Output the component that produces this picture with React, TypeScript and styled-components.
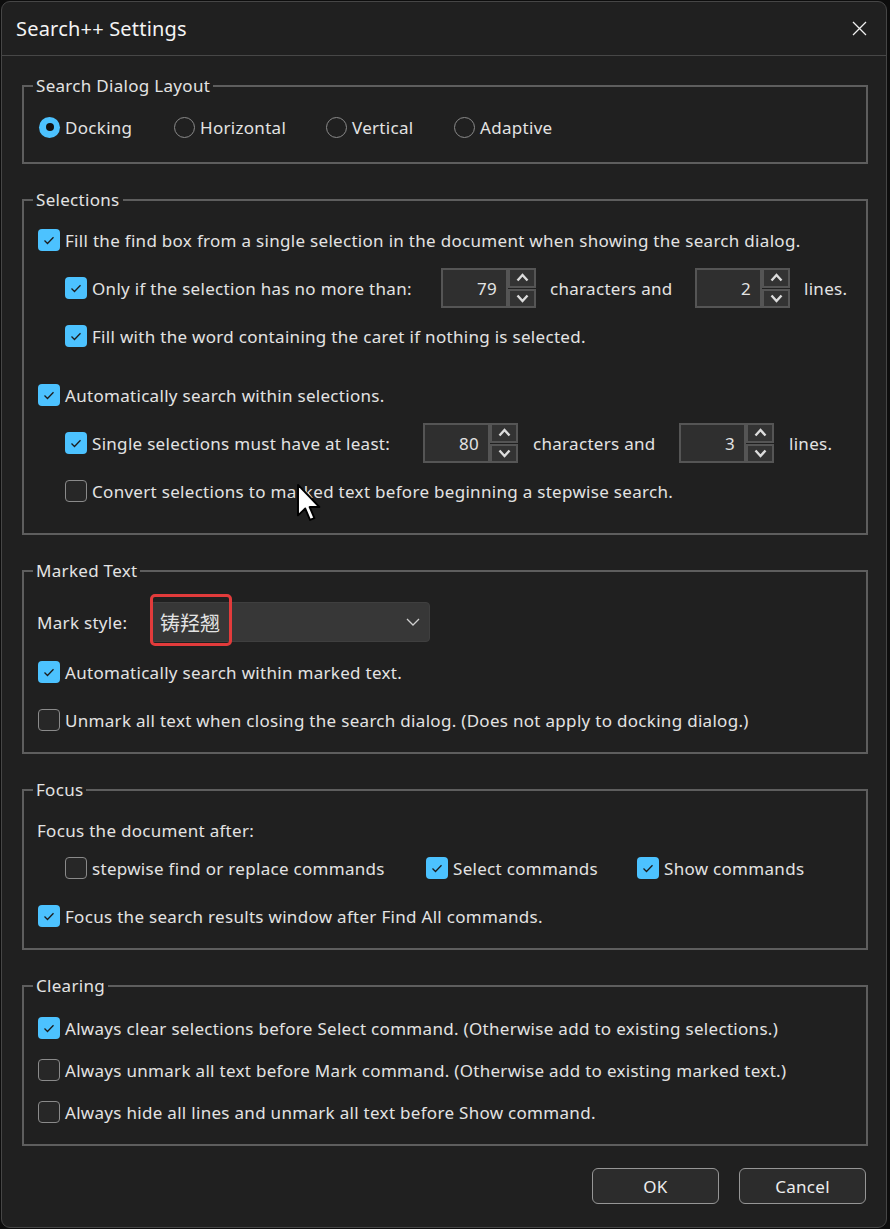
import React from "react";
import styled, { createGlobalStyle } from "styled-components";

const GlobalStyle = createGlobalStyle`
  html, body { margin: 0; padding: 0; background: #0d0d0d; }
  #root { width: 890px; height: 1229px; }
  * { box-sizing: border-box; }
`;

const Window = styled.div`
  position: relative;
  margin: 1px 3px 1px 1px;
  height: 1227px;
  background: #202020;
  border: 1px solid #464646;
  border-radius: 9px;
  display: flex;
  flex-direction: column;
  font-family: "Noto Sans", "Noto Sans CJK SC", sans-serif;
  color: #e3e3e3;
  font-size: 17px;
  letter-spacing: 0.3px;
  overflow: hidden;
`;

const TitleBar = styled.div`
  height: 54px;
  border-bottom: 1px solid #474747;
  display: flex;
  align-items: center;
  justify-content: space-between;
  padding: 0 19px 0 14px;
`;

const Title = styled.div`
  font-size: 20px;
  letter-spacing: 0.2px;
  color: #f4f4f4;
`;

const Content = styled.div`
  padding: 20px 18px 0 20px;
  display: flex;
  flex-direction: column;
  gap: 26px;
`;

const Group = styled.fieldset`
  margin: 0;
  padding: 0;
  min-width: 0;
  border: 2px solid #5e5e5e;
`;

const Legend = styled.legend`
  margin-left: 9px;
  padding: 0 3px;
  line-height: 20px;
  font-size: 17px;
`;

const Body = styled.div<{ $pt: number; $pb: number }>`
  padding: ${(p) => p.$pt}px 0 ${(p) => p.$pb}px 0;
  display: flex;
  flex-direction: column;
`;

const Row = styled.div<{ $h: number; $indent: number }>`
  height: ${(p) => p.$h}px;
  display: flex;
  align-items: center;
  padding-left: ${(p) => p.$indent}px;
  white-space: nowrap;
`;

const Spacer = styled.div<{ $h: number }>`
  height: ${(p) => p.$h}px;
`;

const Item = styled.label<{ $w?: number }>`
  display: flex;
  align-items: center;
  gap: 5px;
  flex-shrink: 0;
  width: ${(p) => (p.$w ? `${p.$w}px` : "auto")};
`;

const Box = styled.span<{ $on: boolean }>`
  width: 22px;
  height: 22px;
  border-radius: 4px;
  flex-shrink: 0;
  display: grid;
  place-items: center;
  background: ${(p) => (p.$on ? "#4cc2ff" : "#272727")};
  border: ${(p) => (p.$on ? "none" : "1.5px solid #8a8a8a")};
`;

const RadioCircle = styled.span<{ $on: boolean }>`
  width: 21px;
  height: 21px;
  border-radius: 50%;
  flex-shrink: 0;
  display: grid;
  place-items: center;
  background: ${(p) => (p.$on ? "#4cc2ff" : "transparent")};
  border: ${(p) => (p.$on ? "none" : "1.5px solid #8a8a8a")};
`;

const Dot = styled.span`
  width: 8px;
  height: 8px;
  border-radius: 50%;
  background: #111;
`;

const Text = styled.span<{ $w?: number; $pl?: number }>`
  display: inline-block;
  flex-shrink: 0;
  width: ${(p) => (p.$w ? `${p.$w}px` : "auto")};
  padding-left: ${(p) => p.$pl ?? 0}px;
`;

const Spin = styled.div`
  display: flex;
  width: 95px;
  height: 40px;
  flex-shrink: 0;
`;

const SpinField = styled.div`
  width: 67px;
  height: 40px;
  background: #2f2f2f;
  border: 2px solid #555;
  display: flex;
  align-items: center;
  justify-content: flex-end;
  padding-right: 9px;
`;

const SpinButtons = styled.div`
  width: 28px;
  display: flex;
  flex-direction: column;
  gap: 1px;
`;

const SpinButton = styled.div`
  flex: 1;
  background: #333;
  border: 2px solid #555;
  display: grid;
  place-items: center;
`;

const ComboWrap = styled.div`
  position: relative;
  width: 280px;
  height: 40px;
  flex-shrink: 0;
`;

const Combo = styled.div`
  width: 100%;
  height: 100%;
  background: #373737;
  border: 1px solid #3f3f3f;
  border-radius: 4px;
  display: flex;
  align-items: center;
  justify-content: space-between;
  padding: 0 8px 0 9px;
  font-size: 20px;
  letter-spacing: 0;
`;

const Highlight = styled.div`
  position: absolute;
  left: 0;
  top: -8px;
  width: 82px;
  bottom: -4px;
  border: 3px solid #e23b3b;
  border-radius: 5px;
  pointer-events: none;
`;

const Footer = styled.div`
  display: flex;
  justify-content: flex-end;
  gap: 20px;
  padding: 22px 20px 0 0;
`;

const Button = styled.button`
  width: 127px;
  height: 36px;
  border-radius: 6px;
  border: 1.5px solid #969696;
  background: #2c2c2c;
  color: #ececec;
  font-family: inherit;
  font-size: 17px;
  letter-spacing: 0.3px;
`;

const Cursor = styled.svg`
  position: absolute;
  left: 294px;
  top: 481px;
`;

const CheckMark = () => (
  <svg width="22" height="22" viewBox="0 0 22 22">
    <polyline points="6.5,11.5 9.5,14.5 15.5,8.2" fill="none" stroke="#1c1c1c" strokeWidth="1.3" />
  </svg>
);

const Check = ({ on, label, w }: { on: boolean; label: string; w?: number }) => (
  <Item $w={w}>
    <Box $on={on}>{on && <CheckMark />}</Box>
    <span>{label}</span>
  </Item>
);

const Radio = ({ on, label, w }: { on: boolean; label: string; w?: number }) => (
  <Item $w={w}>
    <RadioCircle $on={on}>{on && <Dot />}</RadioCircle>
    <span>{label}</span>
  </Item>
);

const Chevron = ({ up }: { up?: boolean }) => (
  <svg width="13" height="9" viewBox="0 0 13 9">
    <polyline
      points={up ? "1.5,7.5 6.5,2 11.5,7.5" : "1.5,1.5 6.5,7 11.5,1.5"}
      fill="none"
      stroke="#dcdcdc"
      strokeWidth="2.4"
    />
  </svg>
);

const SpinBox = ({ value }: { value: string }) => (
  <Spin>
    <SpinField>{value}</SpinField>
    <SpinButtons>
      <SpinButton>
        <Chevron up />
      </SpinButton>
      <SpinButton>
        <Chevron />
      </SpinButton>
    </SpinButtons>
  </Spin>
);

export default function App() {
  return (
    <>
      <GlobalStyle />
      <Window>
        <TitleBar>
          <Title>Search++ Settings</Title>
          <svg width="15" height="15" viewBox="0 0 15 15">
            <path d="M1 1 L14 14 M14 1 L1 14" stroke="#f0f0f0" strokeWidth="1.3" />
          </svg>
        </TitleBar>
        <Content>
          <Group>
            <Legend>Search Dialog Layout</Legend>
            <Body $pt={7} $pb={11}>
              <Row $h={48} $indent={15}>
                <Radio on label="Docking" w={135} />
                <Radio on={false} label="Horizontal" w={152} />
                <Radio on={false} label="Vertical" w={128} />
                <Radio on={false} label="Adaptive" />
              </Row>
            </Body>
          </Group>

          <Group>
            <Legend>Selections</Legend>
            <Body $pt={6} $pb={18}>
              <Row $h={48} $indent={14}>
                <Check on label="Fill the find box from a single selection in the document when showing the search dialog." />
              </Row>
              <Row $h={48} $indent={41}>
                <Check on label="Only if the selection has no more than:" w={376} />
                <SpinBox value="79" />
                <Text $w={159} $pl={14}>characters and</Text>
                <SpinBox value="2" />
                <Text $pl={14}>lines.</Text>
              </Row>
              <Row $h={48} $indent={41}>
                <Check on label="Fill with the word containing the caret if nothing is selected." />
              </Row>
              <Spacer $h={11} />
              <Row $h={48} $indent={14}>
                <Check on label="Automatically search within selections." />
              </Row>
              <Row $h={48} $indent={41}>
                <Check on label="Single selections must have at least:" w={358} />
                <SpinBox value="80" />
                <Text $w={161} $pl={15}>characters and</Text>
                <SpinBox value="3" />
                <Text $pl={15}>lines.</Text>
              </Row>
              <Row $h={48} $indent={41}>
                <Check on={false} label="Convert selections to marked text before beginning a stepwise search." />
              </Row>
            </Body>
          </Group>

          <Group>
            <Legend>Marked Text</Legend>
            <Body $pt={15} $pb={8}>
              <Row $h={52} $indent={13}>
                <Text $w={113}>Mark style:</Text>
                <ComboWrap>
                  <Combo>
                    <span>铸羟翘</span>
                    <svg width="16" height="10" viewBox="0 0 16 10">
                      <polyline points="2,2 8,8 14,2" fill="none" stroke="#cfcfcf" strokeWidth="1.3" />
                    </svg>
                  </Combo>
                  <Highlight />
                </ComboWrap>
              </Row>
              <Row $h={48} $indent={14}>
                <Check on label="Automatically search within marked text." />
              </Row>
              <Row $h={48} $indent={14}>
                <Check on={false} label="Unmark all text when closing the search dialog. (Does not apply to docking dialog.)" />
              </Row>
            </Body>
          </Group>

          <Group>
            <Legend>Focus</Legend>
            <Body $pt={16} $pb={8}>
              <Row $h={28} $indent={13}>
                <Text>Focus the document after:</Text>
              </Row>
              <Row $h={48} $indent={41}>
                <Check on={false} label="stepwise find or replace commands" w={361} />
                <Check on label="Select commands" w={211} />
                <Check on label="Show commands" />
              </Row>
              <Row $h={48} $indent={14}>
                <Check on label="Focus the search results window after Find All commands." />
              </Row>
            </Body>
          </Group>

          <Group>
            <Legend>Clearing</Legend>
            <Body $pt={11} $pb={11}>
              <Row $h={42} $indent={14}>
                <Check on label="Always clear selections before Select command. (Otherwise add to existing selections.)" />
              </Row>
              <Row $h={42} $indent={14}>
                <Check on={false} label="Always unmark all text before Mark command. (Otherwise add to existing marked text.)" />
              </Row>
              <Row $h={42} $indent={14}>
                <Check on={false} label="Always hide all lines and unmark all text before Show command." />
              </Row>
            </Body>
          </Group>
        </Content>
        <Footer>
          <Button>OK</Button>
          <Button>Cancel</Button>
        </Footer>
        <Cursor width="25" height="40" viewBox="0 0 13 21">
          <path d="M1 1 L1 17 L4.8 13.4 L7.3 19.4 L9.6 18.4 L7.1 12.6 L12.2 12.6 Z" fill="#fff" stroke="#000" strokeWidth="1" strokeLinejoin="round" />
        </Cursor>
      </Window>
    </>
  );
}
